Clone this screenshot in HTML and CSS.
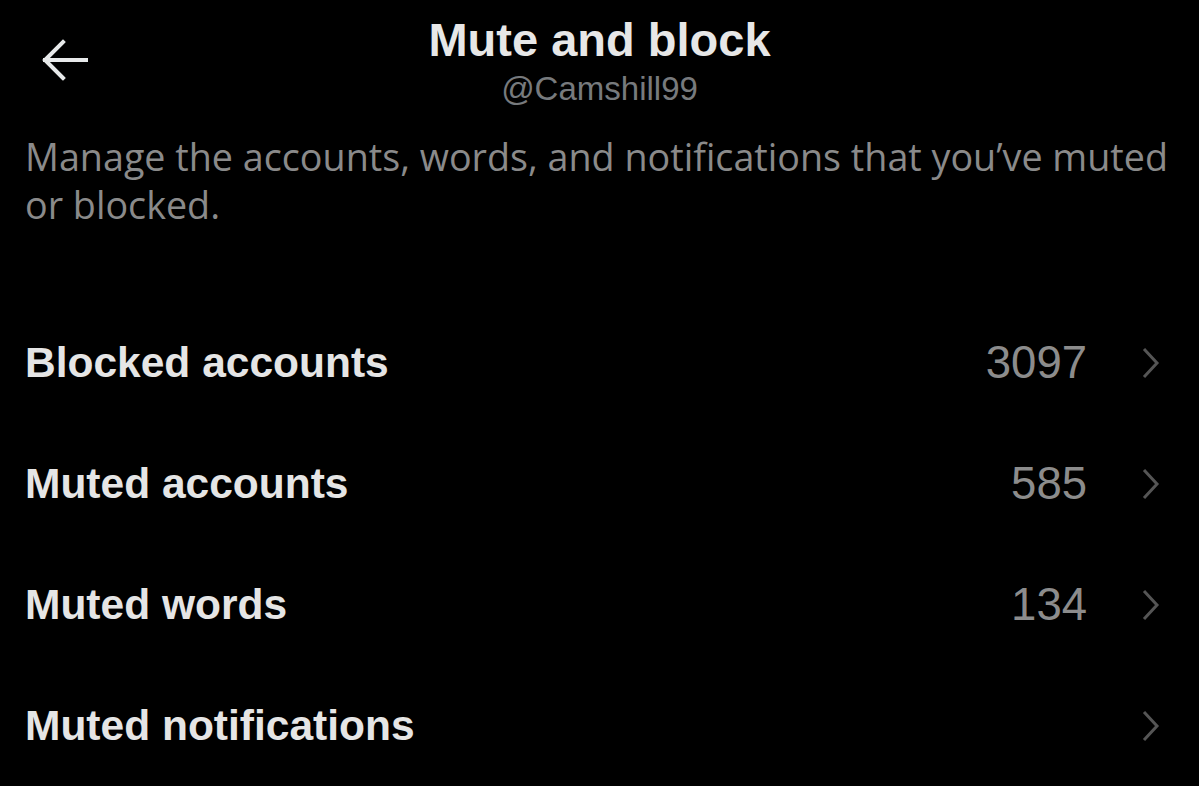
FILE: index.html
```html
<!DOCTYPE html>
<html lang="en">
<head>
<meta charset="utf-8">
<title>Mute and block</title>
<link rel="stylesheet" href="styles.css">
</head>
<body>
<div class="screen">
  <header class="topbar">
    <button class="back" aria-label="Back">
      <svg width="48" height="44" viewBox="0 0 48 44"><path d="M23 4 L5 22 L23 40 M5 22 H47" fill="none" stroke="#e7e9ea" stroke-width="4" stroke-linecap="square" stroke-linejoin="miter"/></svg>
    </button>
    <div class="titles">
      <div class="title">Mute and block</div>
      <div class="handle">@Camshill99</div>
    </div>
  </header>
  <p class="desc">Manage the accounts, words, and notifications that you’ve muted or blocked.</p>
  <ul class="list">
    <li class="row"><span class="label">Blocked accounts</span><span class="count">3097</span><svg class="chev" width="20" height="34" viewBox="0 0 20 34"><path d="M3 3 L16 17 L3 31" fill="none" stroke="#555" stroke-width="3"/></svg></li>
    <li class="row"><span class="label">Muted accounts</span><span class="count">585</span><svg class="chev" width="20" height="34" viewBox="0 0 20 34"><path d="M3 3 L16 17 L3 31" fill="none" stroke="#555" stroke-width="3"/></svg></li>
    <li class="row"><span class="label">Muted words</span><span class="count">134</span><svg class="chev" width="20" height="34" viewBox="0 0 20 34"><path d="M3 3 L16 17 L3 31" fill="none" stroke="#555" stroke-width="3"/></svg></li>
    <li class="row"><span class="label">Muted notifications</span><span class="count"></span><svg class="chev" width="20" height="34" viewBox="0 0 20 34"><path d="M3 3 L16 17 L3 31" fill="none" stroke="#555" stroke-width="3"/></svg></li>
  </ul>
</div>
</body>
</html>
```
FILE: styles.css
```css
html, body {
  margin: 0;
  padding: 0;
  background: #000;
}
.screen {
  width: 1199px;
  height: 786px;
  overflow: hidden;
  background: #000;
  font-family: "Liberation Sans", Arial, sans-serif;
  color: #e7e7e7;
}
.topbar {
  position: relative;
  height: 120px;
}
.back {
  position: absolute;
  left: 40px;
  top: 38px;
  padding: 0;
  border: 0;
  background: none;
  display: block;
}
.back svg { display: block; }
.titles {
  display: flex;
  flex-direction: column;
  align-items: center;
  padding-top: 13px;
}
.title {
  font-size: 47px;
  font-weight: 700;
  line-height: 54px;
  color: #e7e7e7;
}
.handle {
  font-size: 33px;
  line-height: 38px;
  color: #777a7d;
  margin-top: 3px;
}
.desc {
  margin: 13px 0 0;
  padding: 0 16px 0 25px;
  font-family: "Open Sans", "Noto Sans", sans-serif;
  font-size: 37.7px;
  line-height: 48px;
  color: #8a8a8a;
}
.list {
  list-style: none;
  margin: 73px 0 0;
  padding: 0;
}
.row {
  display: flex;
  align-items: center;
  height: 121px;
  padding: 0 38px 0 25px;
}
.label {
  flex: 1;
  font-size: 42.5px;
  font-weight: 700;
  color: #e5e5e5;
}
.count {
  font-size: 45.5px;
  color: #8c8c8c;
  margin-right: 54px;
}
.chev { display: block; }
```
